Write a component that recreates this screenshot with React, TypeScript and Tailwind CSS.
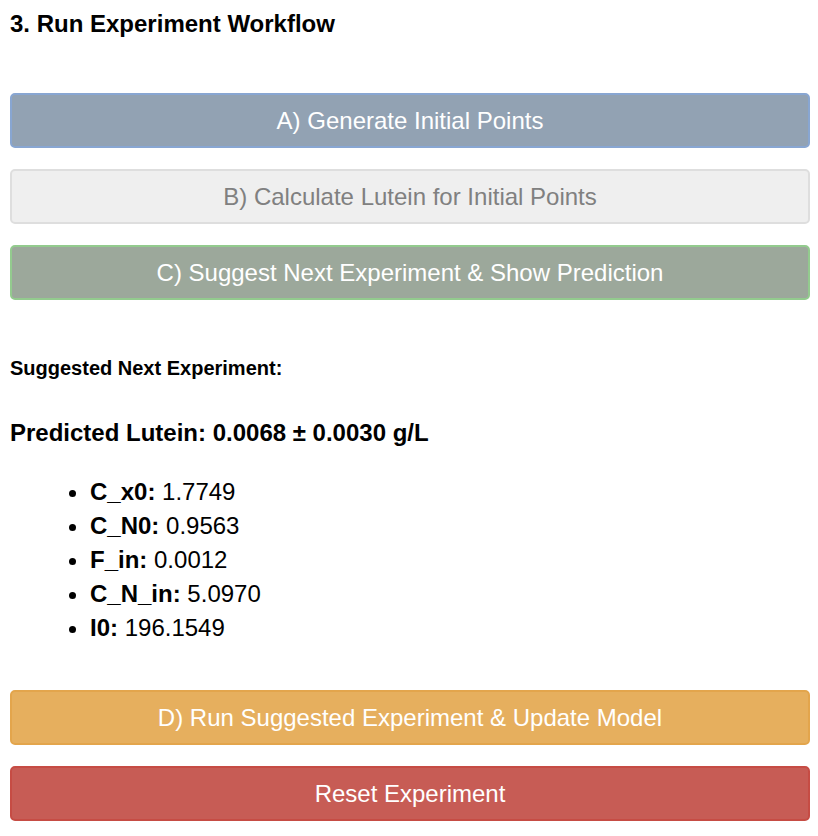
import React from "react";

const PARAMS = [
  { name: "C_x0", value: "1.7749" },
  { name: "C_N0", value: "0.9563" },
  { name: "F_in", value: "0.0012" },
  { name: "C_N_in", value: "5.0970" },
  { name: "I0", value: "196.1549" },
];

function StepButton({
  label,
  className,
}: {
  label: string;
  className: string;
}) {
  return (
    <button
      className={
        "flex h-[55px] w-full items-center justify-center rounded-[5px] border-2 text-[24px] leading-[28px] " +
        className
      }
    >
      {label}
    </button>
  );
}

export default function App() {
  return (
    <div
      className="min-h-[836px] bg-white pl-[10px] pr-[8px] pt-[10px] text-black"
      style={{ fontFamily: '"Liberation Sans", Arial, Helvetica, sans-serif' }}
    >
      <h3 className="text-[24px] font-bold leading-[28px]">
        3. Run Experiment Workflow
      </h3>

      <div className="mt-[55px] flex flex-col gap-[21px]">
        <StepButton
          label="A) Generate Initial Points"
          className="border-[#88a6d2] bg-[#92a2b3] text-white"
        />
        <StepButton
          label="B) Calculate Lutein for Initial Points"
          className="border-[#dedede] bg-[#efefef] text-[#808080]"
        />
        <StepButton
          label="C) Suggest Next Experiment & Show Prediction"
          className="border-[#93cb8e] bg-[#9ca89b] text-white"
        />
      </div>

      <h4 className="mt-[56px] text-[20px] font-bold leading-[24px]">
        Suggested Next Experiment:
      </h4>

      <p className="mt-[39px] text-[24px] font-bold leading-[28px]">
        Predicted Lutein: 0.0068 ± 0.0030 g/L
      </p>

      <ul className="mt-[28px] list-disc pl-[80px] text-[24px] leading-[34px]">
        {PARAMS.map((p) => (
          <li key={p.name}>
            <strong className="font-bold">{p.name}:</strong> {p.value}
          </li>
        ))}
      </ul>

      <div className="mt-[45px] flex flex-col gap-[21px]">
        <StepButton
          label="D) Run Suggested Experiment & Update Model"
          className="border-[#e3a54c] bg-[#e6af5e] text-white"
        />
        <StepButton
          label="Reset Experiment"
          className="border-[#c64c44] bg-[#c75c55] text-white"
        />
      </div>
    </div>
  );
}
